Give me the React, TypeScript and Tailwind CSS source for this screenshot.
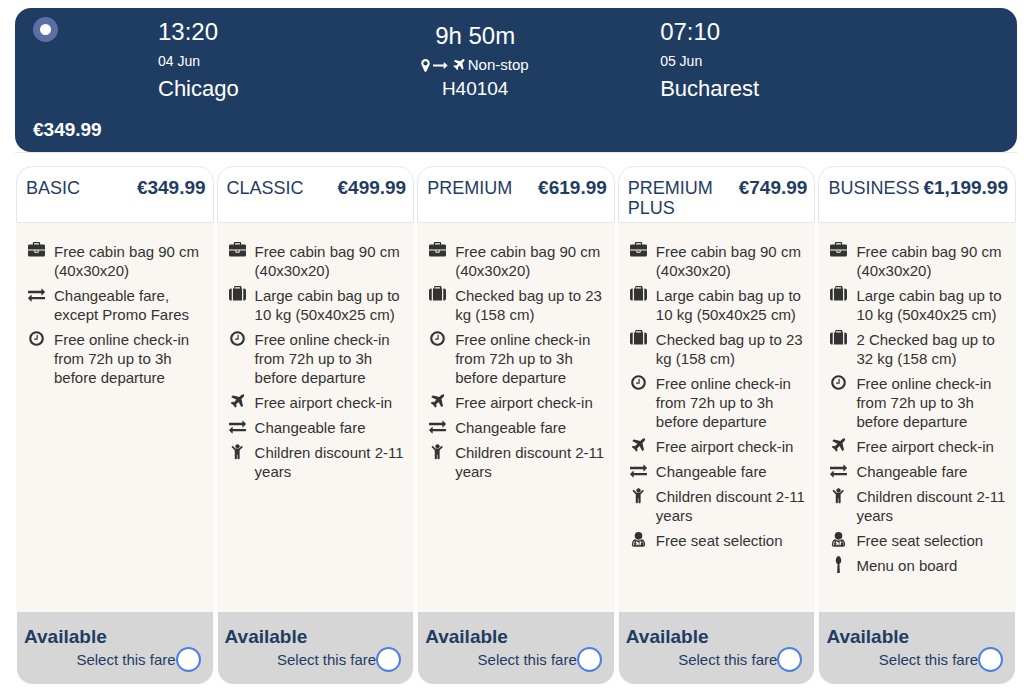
import { useState } from "react";
import type { ReactNode } from "react";

type IconName =
  | "briefcase"
  | "suitcase"
  | "exchange"
  | "clock"
  | "plane"
  | "child"
  | "seat"
  | "spoon"
  | "marker"
  | "arrow";

type Feature = { icon: IconName; text: string };
type Fare = { id: string; name: string; price: string; features: Feature[] };

const shapes: Record<IconName, ReactNode> = {
  briefcase: (
    <path d="M640 256h512v-128h-512v128zm1152 640v480q0 66-47 113t-113 47h-1472q-66 0-113-47t-47-113v-480h672v160q0 26 19 45t45 19h320q26 0 45-19t19-45v-160h672zm-768 0v128h-256v-128h256zm768-480v384h-1792v-384q0-66 47-113t113-47h352v-160q0-40 28-68t68-28h576q40 0 68 28t28 68v160h352q66 0 113 47t47 113z" />
  ),
  suitcase: (
    <path d="M640 256h512v-128h-512v128zm-352 0v1280h-64q-92 0-158-66t-66-158v-832q0-92 66-158t158-66h64zm1088 0v1280h-960v-1280h128v-160q0-40 28-68t68-28h576q40 0 68 28t28 68v160h128zm416 224v832q0 92-66 158t-158 66h-64v-1280h64q92 0 158 66t66 158z" />
  ),
  exchange: (
    <path d="M1792 1184v192q0 13-9.5 22.5t-22.5 9.5h-1376v192q0 13-9.5 22.5t-22.5 9.5q-12 0-24-10l-319-320q-9-9-9-22 0-14 9-23l320-320q9-9 23-9 13 0 22.5 9.5t9.5 22.5v192h1376q13 0 22.5 9.5t9.5 22.5zm0-544q0 14-9 23l-320 320q-9 9-23 9-13 0-22.5-9.5t-9.5-22.5v-192h-1376q-13 0-22.5-9.5t-9.5-22.5v-192q0-13 9.5-22.5t22.5-9.5h1376v-192q0-14 9-23t23-9q12 0 24 10l319 319q9 9 9 23z" />
  ),
  clock: (
    <path d="M1024 544v448q0 14-9 23t-23 9h-320q-14 0-23-9t-9-23v-64q0-14 9-23t23-9h224v-352q0-14 9-23t23-9h64q14 0 23 9t9 23zm416 352q0-148-73-273t-198-198-273-73-273 73-198 198-73 273 73 273 198 198 273 73 273-73 198-198 73-273zm224 0q0 209-103 385.5t-279.5 279.5-385.5 103-385.5-103-279.5-279.5-103-385.5 103-385.5 279.5-279.5 385.5-103 385.5 103 279.5 279.5 103 385.5z" />
  ),
  plane: (
    <path d="M1568 160q44 52 12 148t-108 172l-161 161 160 696q5 19-12 33l-128 96q-7 6-19 6-4 0-7-1-15-3-21-16l-279-508-259 259 53 194q5 17-8 31l-96 96q-9 9-23 9h-2q-15-2-24-13l-189-252-252-189q-11-7-13-23-1-13 9-25l96-97q9-9 23-9 6 0 8 1l194 53 259-259-508-279q-14-8-17-24-2-16 9-27l128-128q14-13 30-8l665 159 160-160q76-76 172-108t148 12z" />
  ),
  child: (
    <>
      <circle cx="896" cy="352" r="224" />
      <path d="M1412 484l-292 292v824q0 46-33 79t-79 33-79-33-33-79v-384h-64v384q0 46-33 79t-79 33-79-33-33-79v-824l-292-292q-28-28-28-68t28-68q29-28 68.500-28t67.500 28l228 228h368l228-228q28-28 68-28t68 28q28 29 28 68.500t-28 67.500z" />
    </>
  ),
  seat: (
    <>
      <circle cx="896" cy="512" r="400" />
      <path
        fillRule="evenodd"
        d="M560 880q150 130 336 130t336-130q190 20 280 190t88 370q0 224-230 224h-948q-230 0-230-224-2-200 88-370t280-190zM500 1060l-70 40q-100 140-100 330 0 60 60 70h90l-70-130 60-140zM640 1050l-30 160 80 120-60 170h110l30-120 60 120h90v-300q-160-30-280-150zM1150 1050q-60 60-150 110v340h130v-160l80-90zM1300 1060l40 150 90 120-30 170h20q50-10 50-70 0-200-100-330z"
      />
    </>
  ),
  spoon: (
    <path d="M1184 474q0 141-55 240.500t-137 133.500l48 870q2 30-19 52t-51 22h-148q-30 0-51-22t-19-52l48-870q-82-34-137-133.500t-55-240.500q0-112 38-220t108-181 142-73 142 73 108 181 38 220z" />
  ),
  marker: (
    <path d="M1152 640q0-106-75-181t-181-75-181 75-75 181 75 181 181 75 181-75 75-181zm256 0q0 109-33 179l-364 774q-16 33-47.500 52t-67.500 19-67.500-19-46.500-52l-365-774q-33-70-33-179 0-212 150-362t362-150 362 150 150 362z" />
  ),
  arrow: (
    <path d="M1728 893q0 14-10 24l-384 354q-16 14-35 6-19-9-19-29v-224h-1248q-14 0-23-9t-9-23v-192q0-14 9-23t23-9h1248v-224q0-21 19-29t35 5l384 350q10 10 10 23z" />
  ),
};

function Icon({ name, className }: { name: IconName; className: string }) {
  return (
    <svg
      viewBox="0 0 1792 1792"
      fill="currentColor"
      className={className}
      aria-hidden="true"
    >
      {shapes[name]}
    </svg>
  );
}

const cabinBag: Feature = {
  icon: "briefcase",
  text: "Free cabin bag 90 cm (40x30x20)",
};
const largeBag: Feature = {
  icon: "suitcase",
  text: "Large cabin bag up to 10 kg (50x40x25 cm)",
};
const checkedBag: Feature = {
  icon: "suitcase",
  text: "Checked bag up to 23 kg (158 cm)",
};
const onlineCheckIn: Feature = {
  icon: "clock",
  text: "Free online check-in from 72h up to 3h before departure",
};
const airportCheckIn: Feature = { icon: "plane", text: "Free airport check-in" };
const changeable: Feature = { icon: "exchange", text: "Changeable fare" };
const children: Feature = {
  icon: "child",
  text: "Children discount 2-11 years",
};
const seatSelection: Feature = { icon: "seat", text: "Free seat selection" };

const fares: Fare[] = [
  {
    id: "basic",
    name: "BASIC",
    price: "€349.99",
    features: [
      cabinBag,
      { icon: "exchange", text: "Changeable fare, except Promo Fares" },
      onlineCheckIn,
    ],
  },
  {
    id: "classic",
    name: "CLASSIC",
    price: "€499.99",
    features: [
      cabinBag,
      largeBag,
      onlineCheckIn,
      airportCheckIn,
      changeable,
      children,
    ],
  },
  {
    id: "premium",
    name: "PREMIUM",
    price: "€619.99",
    features: [
      cabinBag,
      checkedBag,
      onlineCheckIn,
      airportCheckIn,
      changeable,
      children,
    ],
  },
  {
    id: "premium-plus",
    name: "PREMIUM PLUS",
    price: "€749.99",
    features: [
      cabinBag,
      largeBag,
      checkedBag,
      onlineCheckIn,
      airportCheckIn,
      changeable,
      children,
      seatSelection,
    ],
  },
  {
    id: "business",
    name: "BUSINESS",
    price: "€1,199.99",
    features: [
      cabinBag,
      largeBag,
      { icon: "suitcase", text: "2 Checked bag up to 32 kg (158 cm)" },
      onlineCheckIn,
      airportCheckIn,
      changeable,
      children,
      seatSelection,
      { icon: "spoon", text: "Menu on board" },
    ],
  },
];

function FlightSummary() {
  return (
    <section className="border-b border-gray-200">
      <label className="flex min-h-36 rounded-2xl bg-[#1f3d63] px-[18px] pt-[9px] pb-3 text-white">
        <div className="flex w-[125px] flex-col justify-between">
          <input
            type="radio"
            name="flight"
            defaultChecked
            aria-label="Flight H40104"
            className="size-[25px] appearance-none rounded-full border-[7px] border-[#5a6fa6] bg-white"
          />
          <span className="text-[19px] leading-5 font-bold">€349.99</span>
        </div>
        <div className="w-[26%]">
          <div className="text-2xl leading-[30px]">13:20</div>
          <div className="text-sm leading-7">04 Jun</div>
          <div className="text-[22px] leading-7">Chicago</div>
        </div>
        <div className="w-[132px] pt-1 text-center">
          <div className="text-2xl leading-[30px]">9h 50m</div>
          <div className="flex items-center justify-center pr-1 text-[15px] leading-7">
            <Icon name="marker" className="size-[15px]" />
            <Icon name="arrow" className="mr-1 size-[15px]" />
            <Icon name="plane" className="mr-0.5 size-[14px]" />
            Non-stop
          </div>
          <div className="text-[19px] leading-5">H40104</div>
        </div>
        <div className="ml-[119px]">
          <div className="text-2xl leading-[30px]">07:10</div>
          <div className="text-sm leading-7">05 Jun</div>
          <div className="text-[22px] leading-7">Bucharest</div>
        </div>
      </label>
    </section>
  );
}

function FareCard({
  fare,
  selected,
  onSelect,
}: {
  fare: Fare;
  selected: boolean;
  onSelect: () => void;
}) {
  return (
    <article className="flex flex-col">
      <header className="flex min-h-[57px] items-start justify-between rounded-t-2xl border border-gray-200 bg-white pt-[11px] pr-[7px] pl-[9px] text-[#1f3d63]">
        <h2 className="text-lg leading-5">{fare.name}</h2>
        <span className="text-[19px] leading-5 font-bold">{fare.price}</span>
      </header>
      <ul className="flex grow flex-col gap-1.5 bg-[#faf7f2] pt-[19px] pr-2 pb-9 pl-3">
        {fare.features.map((feature) => (
          <li
            key={feature.text}
            className="flex items-start text-[15px] leading-[19px] text-[#333]"
          >
            <Icon
              name={feature.icon}
              className="mr-[9px] size-[17px] shrink-0"
            />
            <span>{feature.text}</span>
          </li>
        ))}
      </ul>
      <footer className="mx-px min-h-[72px] rounded-b-2xl bg-[#d6d6d6] pt-[15px] pr-3 pl-[7px] text-[#1f3d63] shadow-xs">
        <div className="text-[19px] leading-5 font-bold">Available</div>
        <label className="flex items-center justify-end text-[15px] leading-[25px]">
          Select this fare
          <input
            type="radio"
            name="fare"
            value={fare.id}
            checked={selected}
            onChange={onSelect}
            className="size-[25px] appearance-none rounded-full border-2 border-[#4a7fe6] bg-white checked:border-8"
          />
        </label>
      </footer>
    </article>
  );
}

export default function App() {
  const [selectedFare, setSelectedFare] = useState<string | null>(null);

  return (
    <main className="bg-white pt-2 font-['Liberation_Sans',Arial,sans-serif]">
      <div className="pr-[7px] pl-[15px]">
        <FlightSummary />
      </div>
      <div className="mt-[13px] grid min-h-[518px] grid-cols-5 gap-[3px] pr-2 pl-4">
        {fares.map((fare) => (
          <FareCard
            key={fare.id}
            fare={fare}
            selected={selectedFare === fare.id}
            onSelect={() => setSelectedFare(fare.id)}
          />
        ))}
      </div>
    </main>
  );
}
